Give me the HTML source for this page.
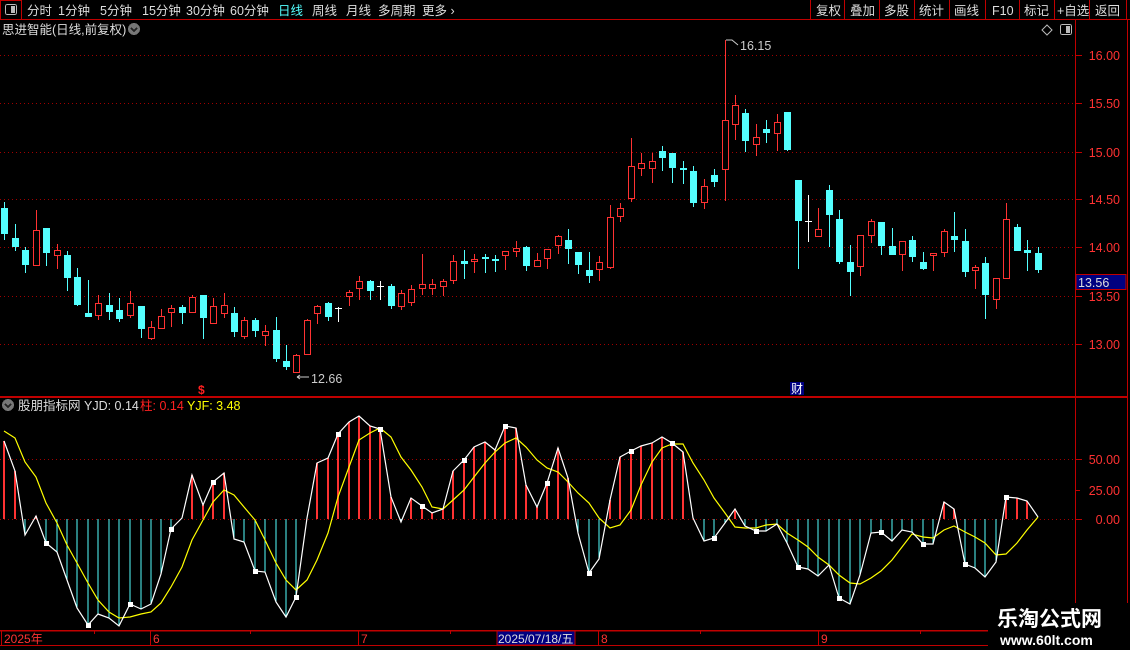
<!DOCTYPE html>
<html><head><meta charset="utf-8"><style>
html,body{margin:0;padding:0;background:#000;width:1130px;height:650px;overflow:hidden;font-family:"Liberation Sans","Noto Sans CJK SC",sans-serif}
svg text{font-family:"Liberation Sans","Noto Sans CJK SC",sans-serif}
</style></head><body>
<svg width="1130" height="650" viewBox="0 0 1130 650" xmlns="http://www.w3.org/2000/svg" shape-rendering="crispEdges">
<rect width="1130" height="650" fill="#000"/>
<line x1="0" y1="19.5" x2="1130" y2="19.5" stroke="#c00000"/>
<rect x="0.5" y="0.5" width="21" height="19" fill="none" stroke="#c00000"/>
<rect x="5.5" y="4.5" width="11" height="10" rx="2" fill="none" stroke="#bbb"/>
<rect x="11" y="6" width="4" height="7" fill="#bbb"/>
<g font-size="12.5" fill="#ddd">
<text x="27" y="15">分时</text><text x="58" y="15">1分钟</text><text x="100" y="15">5分钟</text>
<text x="142" y="15">15分钟</text><text x="186" y="15">30分钟</text><text x="230" y="15">60分钟</text>
<text x="278" y="15" fill="#54ffff">日线</text><text x="312" y="15">周线</text><text x="346" y="15">月线</text>
<text x="378" y="15">多周期</text><text x="422" y="15">更多 ›</text>
</g>
<g stroke="#c00000"><line x1="810.5" y1="0" x2="810.5" y2="19"/><line x1="844.5" y1="0" x2="844.5" y2="19"/><line x1="879.5" y1="0" x2="879.5" y2="19"/><line x1="914.5" y1="0" x2="914.5" y2="19"/><line x1="949.5" y1="0" x2="949.5" y2="19"/><line x1="985.5" y1="0" x2="985.5" y2="19"/><line x1="1019.5" y1="0" x2="1019.5" y2="19"/><line x1="1054.5" y1="0" x2="1054.5" y2="19"/><line x1="1089.5" y1="0" x2="1089.5" y2="19"/><line x1="1126.5" y1="0" x2="1126.5" y2="19"/></g>
<g font-size="12.5" fill="#ddd">
<text x="816" y="15">复权</text><text x="850" y="15">叠加</text><text x="884" y="15">多股</text><text x="919" y="15">统计</text><text x="954" y="15">画线</text><text x="992" y="15">F10</text><text x="1024" y="15">标记</text><text x="1057" y="15">+自选</text><text x="1095" y="15">返回</text>
</g>
<text x="2" y="34" font-size="12.5" fill="#ddd">思进智能(日线,前复权)</text>
<circle cx="134" cy="29" r="6" fill="#777"/><path d="M131 28l3 3 3-3" stroke="#222" stroke-width="1.5" fill="none"/>
<path d="M1047 25l5 5-5 5-5-5z" fill="none" stroke="#bbb" shape-rendering="auto"/>
<rect x="1060.5" y="24.5" width="11" height="10" rx="2" fill="none" stroke="#bbb"/><rect x="1066" y="26" width="4" height="7" fill="#bbb"/>
<line x1="1075.5" y1="20" x2="1075.5" y2="646" stroke="#c00000"/>
<line x1="1127.5" y1="20" x2="1127.5" y2="646" stroke="#c00000"/>
<line x1="0" y1="397" x2="1128" y2="397" stroke="#c00000" stroke-width="2"/>
<g stroke="#a00000" stroke-dasharray="1 3">
<line x1="0" y1="55.5" x2="1075" y2="55.5"/><line x1="0" y1="103.5" x2="1075" y2="103.5"/><line x1="0" y1="152.5" x2="1075" y2="152.5"/><line x1="0" y1="199.5" x2="1075" y2="199.5"/><line x1="0" y1="247.5" x2="1075" y2="247.5"/><line x1="0" y1="296.5" x2="1075" y2="296.5"/><line x1="0" y1="344.5" x2="1075" y2="344.5"/>
<line x1="0" y1="459.5" x2="1075" y2="459.5"/><line x1="0" y1="519.5" x2="1075" y2="519.5"/>
</g>
<g stroke="#c00000">
<line x1="1076" y1="55.5" x2="1082" y2="55.5"/><line x1="1076" y1="103.5" x2="1082" y2="103.5"/><line x1="1076" y1="152.5" x2="1082" y2="152.5"/><line x1="1076" y1="199.5" x2="1082" y2="199.5"/><line x1="1076" y1="247.5" x2="1082" y2="247.5"/><line x1="1076" y1="296.5" x2="1082" y2="296.5"/><line x1="1076" y1="344.5" x2="1082" y2="344.5"/>
<line x1="1076" y1="459.5" x2="1082" y2="459.5"/><line x1="1076" y1="490.5" x2="1080" y2="490.5"/><line x1="1076" y1="519.5" x2="1082" y2="519.5"/>
</g>
<g font-size="12.5" fill="#ff3232" text-anchor="end">
<text x="1120" y="60">16.00</text><text x="1120" y="108">15.50</text><text x="1120" y="157">15.00</text><text x="1120" y="204">14.50</text><text x="1120" y="252">14.00</text><text x="1120" y="301">13.50</text><text x="1120" y="349">13.00</text>
<text x="1120" y="464">50.00</text><text x="1120" y="495">25.00</text><text x="1120" y="524">0.00</text>
</g>
<rect x="1076" y="274.5" width="50" height="15" fill="#000080" stroke="#c00000"/>
<text x="1078" y="287" font-size="12.5" fill="#ddd">13.56</text>
<g stroke-width="1" fill="none">
<path stroke="#54ffff" d="M4.5 202V240M15.5 224V251M25.5 247V273M46.5 228V266M67.5 251V291M77.5 268V306M88.5 280V317M109.5 293V320M119.5 298V322M141.5 306V338M182.5 305V324M203.5 295V339M234.5 307V337M255.5 318V337M276.5 317V362M286.5 345V370M328.5 302V321M370.5 280V300M391.5 284V309M464.5 250V279M485.5 254V273M495.5 255V272M526.5 246V271M568.5 229V264M578.5 252V274M589.5 252V283M662.5 146V171M672.5 153V183M683.5 161V184M693.5 166V207M714.5 169V187M745.5 109V152M766.5 120V143M787.5 112V151M798.5 180V269M829.5 185V247M839.5 210V264M850.5 245V296M881.5 222V255M892.5 228V255M912.5 236V262M923.5 252V270M954.5 212V252M965.5 229V277M985.5 257V319M1017.5 224V251M1027.5 240V271M1038.5 247V273"/>
<path stroke="#ff3232" d="M36.5 210V266M57.5 244V269M98.5 295V320M130.5 291V318M151.5 321V340M161.5 309V329M171.5 305V327M192.5 295V313M213.5 298V324M224.5 293V318M244.5 317V339M265.5 325V346M296.5 354V373M307.5 319V355M317.5 305V324M349.5 290V306M359.5 276V300M401.5 290V310M411.5 285V306M422.5 254V295M432.5 279V295M443.5 279V296M453.5 255V284M474.5 254V273M505.5 251V270M516.5 241V257M537.5 253V267M547.5 249V269M558.5 235V254M599.5 256V281M610.5 205V269M620.5 203V222M631.5 138V202M641.5 153V176M652.5 153V183M704.5 179V209M725.5 40V201M735.5 95V140M756.5 124V156M777.5 114V151M818.5 208V237M860.5 235V276M871.5 219V243M902.5 241V271M933.5 253V271M944.5 229V257M975.5 265V289M996.5 278V309M1006.5 203V279"/>
<path stroke="#fff" d="M338.5 307V322M335 308.5H342M380.5 281V300M377 286.5H384M808.5 195V242M805 221.5H812"/>
</g>
<g fill="#54ffff">
<rect x="1" y="208" width="7" height="26"/><rect x="12" y="238" width="7" height="9"/><rect x="22" y="250" width="7" height="15"/><rect x="43" y="228" width="7" height="25"/><rect x="64" y="255" width="7" height="23"/><rect x="74" y="277" width="7" height="28"/><rect x="85" y="313" width="7" height="4"/><rect x="106" y="305" width="7" height="7"/><rect x="116" y="310" width="7" height="9"/><rect x="138" y="306" width="7" height="23"/><rect x="179" y="307" width="7" height="6"/><rect x="200" y="295" width="7" height="23"/><rect x="231" y="313" width="7" height="19"/><rect x="252" y="320" width="7" height="11"/><rect x="273" y="330" width="7" height="29"/><rect x="283" y="361" width="7" height="6"/><rect x="325" y="303" width="7" height="14"/><rect x="367" y="281" width="7" height="10"/><rect x="388" y="286" width="7" height="20"/><rect x="461" y="261" width="7" height="3"/><rect x="482" y="257" width="7" height="2"/><rect x="492" y="259" width="7" height="2"/><rect x="523" y="247" width="7" height="19"/><rect x="565" y="240" width="7" height="9"/><rect x="575" y="252" width="7" height="13"/><rect x="586" y="270" width="7" height="6"/><rect x="659" y="151" width="7" height="7"/><rect x="669" y="153" width="7" height="15"/><rect x="680" y="168" width="7" height="2"/><rect x="690" y="171" width="7" height="32"/><rect x="711" y="175" width="7" height="7"/><rect x="742" y="113" width="7" height="28"/><rect x="763" y="129" width="7" height="4"/><rect x="784" y="112" width="7" height="38"/><rect x="795" y="180" width="7" height="41"/><rect x="826" y="190" width="7" height="25"/><rect x="836" y="219" width="7" height="43"/><rect x="847" y="262" width="7" height="10"/><rect x="878" y="222" width="7" height="24"/><rect x="889" y="246" width="7" height="9"/><rect x="909" y="240" width="7" height="17"/><rect x="920" y="262" width="7" height="7"/><rect x="951" y="236" width="7" height="4"/><rect x="962" y="241" width="7" height="31"/><rect x="982" y="263" width="7" height="32"/><rect x="1014" y="227" width="7" height="24"/><rect x="1024" y="250" width="7" height="3"/><rect x="1035" y="253" width="7" height="17"/>
</g>
<g fill="#000" stroke="#ff3232">
<rect x="33.5" y="230.5" width="6" height="35"/><rect x="54.5" y="250.5" width="6" height="5"/><rect x="95.5" y="303.5" width="6" height="12"/><rect x="127.5" y="303.5" width="6" height="12"/><rect x="148.5" y="327.5" width="6" height="11"/><rect x="158.5" y="316.5" width="6" height="12"/><rect x="168.5" y="308.5" width="6" height="4"/><rect x="189.5" y="297.5" width="6" height="15"/><rect x="210.5" y="306.5" width="6" height="17"/><rect x="221.5" y="305.5" width="6" height="8"/><rect x="241.5" y="320.5" width="6" height="16"/><rect x="262.5" y="331.5" width="6" height="4"/><rect x="293.5" y="355.5" width="6" height="17"/><rect x="304.5" y="320.5" width="6" height="34"/><rect x="314.5" y="306.5" width="6" height="7"/><rect x="346.5" y="292.5" width="6" height="4"/><rect x="356.5" y="281.5" width="6" height="7"/><rect x="398.5" y="293.5" width="6" height="13"/><rect x="408.5" y="289.5" width="6" height="13"/><rect x="419.5" y="284.5" width="6" height="4"/><rect x="429.5" y="284.5" width="6" height="4"/><rect x="440.5" y="281.5" width="6" height="5"/><rect x="450.5" y="261.5" width="6" height="19"/><rect x="471.5" y="259.5" width="6" height="2"/><rect x="502.5" y="251.5" width="6" height="4"/><rect x="513.5" y="248.5" width="6" height="3"/><rect x="534.5" y="260.5" width="6" height="6"/><rect x="544.5" y="249.5" width="6" height="9"/><rect x="555.5" y="236.5" width="6" height="9"/><rect x="596.5" y="262.5" width="6" height="7"/><rect x="607.5" y="217.5" width="6" height="50"/><rect x="617.5" y="208.5" width="6" height="8"/><rect x="628.5" y="166.5" width="6" height="32"/><rect x="638.5" y="163.5" width="6" height="5"/><rect x="649.5" y="161.5" width="6" height="7"/><rect x="701.5" y="186.5" width="6" height="16"/><rect x="722.5" y="120.5" width="6" height="49"/><rect x="732.5" y="105.5" width="6" height="19"/><rect x="753.5" y="137.5" width="6" height="7"/><rect x="774.5" y="122.5" width="6" height="11"/><rect x="815.5" y="229.5" width="6" height="7"/><rect x="857.5" y="235.5" width="6" height="31"/><rect x="868.5" y="221.5" width="6" height="14"/><rect x="899.5" y="241.5" width="6" height="13"/><rect x="930.5" y="253.5" width="6" height="2"/><rect x="941.5" y="231.5" width="6" height="21"/><rect x="972.5" y="267.5" width="6" height="3"/><rect x="993.5" y="278.5" width="6" height="21"/><rect x="1003.5" y="219.5" width="6" height="59"/>
</g>
<g font-size="12.5" fill="#ccc">
<text x="740" y="50">16.15</text><path d="M726 40h6l6 5" stroke="#ccc" fill="none" shape-rendering="auto"/>
<text x="311" y="383">12.66</text><path d="M297 377h12M297 377l3-2M297 377l3 2" stroke="#ccc" fill="none" shape-rendering="auto"/>
</g>
<text x="198" y="394" font-size="12" font-weight="bold" fill="#ff2020">$</text>
<rect x="790" y="382" width="14" height="13" fill="#000080"/><text x="791" y="393" font-size="12" fill="#fff">财</text>
<circle cx="8" cy="405" r="6" fill="#777"/><path d="M5 404l3 3 3-3" stroke="#222" stroke-width="1.5" fill="none"/>
<text x="18" y="410" font-size="12.5" fill="#ddd">股朋指标网</text>
<text x="84" y="410" font-size="12.5" fill="#ddd">YJD: 0.14</text>
<text x="140" y="410" font-size="12.5" fill="#ff2020">柱: 0.14</text>
<text x="187" y="410" font-size="12.5" fill="#ffff00">YJF: 3.48</text>
<path stroke="#ff3232" stroke-width="1.6" d="M4 519V441M15 519V471M36 519V516M192 519V475M203 519V505M213 519V482M224 519V473M317 519V463M328 519V458M338 519V434M349 519V422M359 519V416M370 519V426M380 519V429M391 519V497M411 519V498M422 519V506M432 519V513M443 519V509M453 519V471M464 519V460M474 519V447M485 519V442M495 519V450M505 519V426M516 519V428M526 519V485M537 519V507M547 519V483M558 519V448M568 519V478M610 519V500M620 519V457M631 519V451M641 519V446M652 519V443M662 519V437M672 519V443M683 519V452M735 519V509M944 519V502M954 519V509M1006 519V497M1017 519V498M1027 519V501"/>
<path stroke="#54ffff" stroke-width="1.3" d="M25 519V535M46 519V543M57 519V552M67 519V580M77 519V608M88 519V625M98 519V614M109 519V618M119 519V626M130 519V604M141 519V609M151 519V604M161 519V574M171 519V529M234 519V539M244 519V542M255 519V571M265 519V572M276 519V602M286 519V617M296 519V597M401 519V522M578 519V533M589 519V573M599 519V559M704 519V541M714 519V538M725 519V523M745 519V526M756 519V531M766 519V531M777 519V524M787 519V543M798 519V567M808 519V569M818 519V576M829 519V565M839 519V598M850 519V604M860 519V575M871 519V533M881 519V532M892 519V541M902 519V530M912 519V532M923 519V544M933 519V544M965 519V564M975 519V568M985 519V577M996 519V562"/>
<g shape-rendering="auto" fill="none" stroke-width="1.2">
<polyline stroke="#ffff00" points="4,431 15,438 25,462 36,477 46,503 57,523 67,545 77,563 88,583 98,600 109,612 119,618 130,617 141,614 151,612 161,603 171,587 182,567 192,540 203,520 213,502 224,490 234,495 244,507 255,520 265,540 276,563 286,580 296,590 307,580 317,560 328,533 338,497 349,467 359,440 370,433 380,428 391,437 401,457 411,470 422,487 432,507 443,509 453,500 464,490 474,477 485,463 495,452 505,443 516,438 526,447 537,460 547,468 558,472 568,482 578,493 589,503 599,518 610,528 620,525 631,510 641,485 652,462 662,448 672,444 683,444 693,463 704,480 714,498 725,513 735,527 745,528 756,528 766,525 777,524 787,533 798,540 808,547 818,557 829,565 839,575 850,583 860,584 871,578 881,571 892,560 902,547 912,534 923,537 933,538 944,530 954,526 965,532 975,537 985,543 996,555 1006,554 1017,543 1027,530 1038,517"/>
<polyline stroke="#fff" points="4,441 15,471 25,535 36,516 46,543 57,552 67,580 77,608 88,625 98,614 109,618 119,626 130,604 141,609 151,604 161,574 171,529 182,518 192,475 203,505 213,482 224,473 234,539 244,542 255,571 265,572 276,602 286,617 296,597 307,518 317,463 328,458 338,434 349,422 359,416 370,426 380,429 391,497 401,522 411,498 422,506 432,513 443,509 453,471 464,460 474,447 485,442 495,450 505,426 516,428 526,485 537,507 547,483 558,448 568,478 578,533 589,573 599,559 610,500 620,457 631,451 641,446 652,443 662,437 672,443 683,452 693,518 704,541 714,538 725,523 735,509 745,526 756,531 766,531 777,524 787,543 798,567 808,569 818,576 829,565 839,598 850,604 860,575 871,533 881,532 892,541 902,530 912,532 923,544 933,544 944,502 954,509 965,564 975,568 985,577 996,562 1006,497 1017,498 1027,501 1038,517"/>
</g>
<g fill="#fff">
<rect x="44" y="541" width="5" height="5"/><rect x="86" y="623" width="5" height="5"/><rect x="128" y="602" width="5" height="5"/><rect x="169" y="527" width="5" height="5"/><rect x="211" y="480" width="5" height="5"/><rect x="253" y="569" width="5" height="5"/><rect x="294" y="595" width="5" height="5"/><rect x="336" y="432" width="5" height="5"/><rect x="378" y="427" width="5" height="5"/><rect x="420" y="504" width="5" height="5"/><rect x="462" y="458" width="5" height="5"/><rect x="503" y="424" width="5" height="5"/><rect x="545" y="481" width="5" height="5"/><rect x="587" y="571" width="5" height="5"/><rect x="629" y="449" width="5" height="5"/><rect x="670" y="441" width="5" height="5"/><rect x="712" y="536" width="5" height="5"/><rect x="754" y="529" width="5" height="5"/><rect x="796" y="565" width="5" height="5"/><rect x="837" y="596" width="5" height="5"/><rect x="879" y="530" width="5" height="5"/><rect x="921" y="542" width="5" height="5"/><rect x="963" y="562" width="5" height="5"/><rect x="1004" y="495" width="5" height="5"/>
</g>
<line x1="0" y1="630.5" x2="1128" y2="630.5" stroke="#c00000" stroke-width="1.5"/>
<line x1="0" y1="645.5" x2="1128" y2="645.5" stroke="#c00000"/>
<g stroke="#c00000"><line x1="1.5" y1="631" x2="1.5" y2="645"/><line x1="150.5" y1="631" x2="150.5" y2="645"/><line x1="358.5" y1="631" x2="358.5" y2="645"/><line x1="598.5" y1="631" x2="598.5" y2="645"/><line x1="818.5" y1="631" x2="818.5" y2="645"/>
<line x1="94.5" y1="631" x2="94.5" y2="634"/><line x1="250.5" y1="631" x2="250.5" y2="634"/><line x1="450.5" y1="631" x2="450.5" y2="634"/><line x1="700.5" y1="631" x2="700.5" y2="634"/><line x1="920.5" y1="631" x2="920.5" y2="634"/></g>
<rect x="497" y="631" width="78" height="14" fill="#000080" stroke="#c00000"/>
<g font-size="12" fill="#ff3232">
<text x="4" y="643">2025年</text><text x="153" y="643">6</text><text x="361" y="643">7</text><text x="601" y="643">8</text><text x="821" y="643">9</text>
</g>
<text x="498" y="643" font-size="12" fill="#ddd">2025/07/18/五</text>
<rect x="988" y="603" width="140" height="47" fill="#000"/>
<text x="997" y="626" font-size="21" font-weight="bold" fill="#fff">乐淘公式网</text>
<text x="1000" y="645" font-size="14" font-weight="bold" fill="#fff" font-family="Liberation Serif,serif">www.60lt.com</text>
</svg>
</body></html>
